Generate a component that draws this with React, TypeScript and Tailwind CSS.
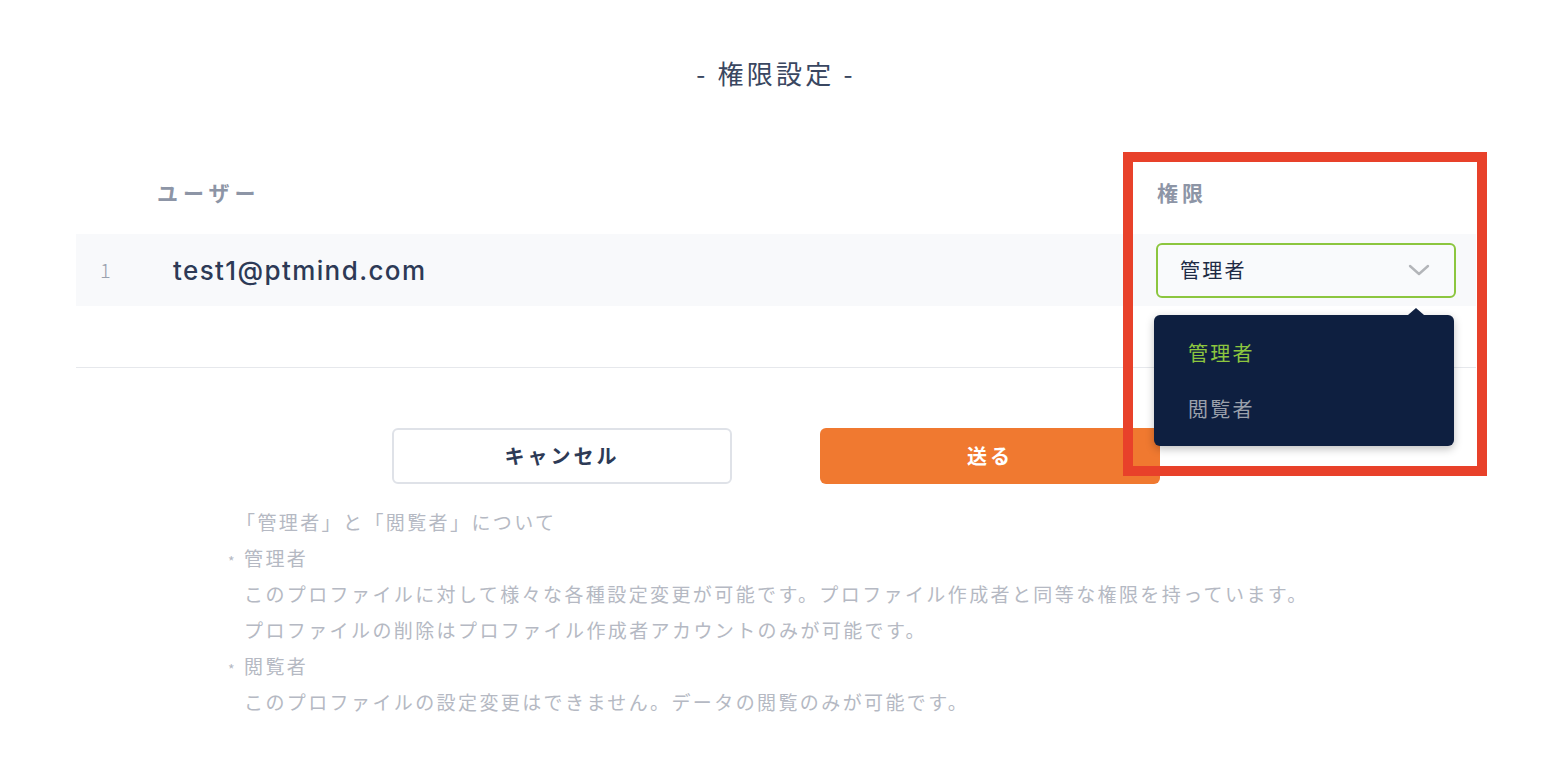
const jp = { fontFamily: '"Noto Sans CJK JP", "Noto Sans", sans-serif' };

function Chevron() {
  return (
    <svg width="22" height="12" viewBox="0 0 22 12" fill="none">
      <path d="M2 2l9 8 9-8" stroke="#b3b5b9" strokeWidth="2.4" strokeLinecap="round" strokeLinejoin="round" />
    </svg>
  );
}

function Bullet({ label }: { label: string }) {
  return (
    <div className="flex">
      <span className="w-[16px] translate-y-[3px] text-[14px] tracking-normal text-[#b5b9c3]">*</span>
      <span>{label}</span>
    </div>
  );
}

export default function App() {
  return (
    <div className="relative min-h-[770px] w-full bg-white" style={jp}>
      <div className="mx-auto w-[1400px] pt-[55px]">
        <h1 className="text-center text-[26px] leading-[36px] tracking-[3.25px] text-[#3a4761]">- 権限設定 -</h1>

        {/* table */}
        <div className="mt-[88px] flex h-[28px] items-center text-[21px] font-bold tracking-[5px] text-[#8d95a6]">
          <div className="pl-[81px]">ユーザー</div>
          <div className="ml-auto w-[320px] pl-[1px] tracking-[4px]">権限</div>
        </div>
        <div className="mt-[27px] flex h-[72px] items-center bg-[#f8f9fb]">
          <div className="w-[97px] pl-[24px] text-[20px] font-light text-[#9aa1ae]">1</div>
          <div className="text-[26px] font-medium tracking-[1.4px] text-[#2d3a56]" style={{ fontFamily: "Inter, sans-serif" }}>
            test1@ptmind.com
          </div>
          <div className="relative ml-auto mr-[20px] w-[300px]">
            <div className="flex h-[55px] items-center justify-between rounded-[6px] border-2 border-[#8cc63f] bg-[#f9fafc] pl-[22px] pr-[24px]">
              <span className="text-[20px] tracking-[2.3px] text-[#1e2a45]">管理者</span>
              <Chevron />
            </div>
            <div className="absolute left-[-2px] top-[72px] z-10 h-[131px] w-[300px] rounded-[6px] bg-[#0e1f40] pt-[20px] shadow-[0_3px_8px_rgba(0,0,0,0.25)]">
              <div className="absolute right-[30px] top-[-7px] h-0 w-0 border-x-[8px] border-b-[7px] border-x-transparent border-b-[#0e1f40]" />
              <div className="flex h-[36px] items-center pl-[34px] text-[20px] tracking-[2.3px] text-[#8cc63f]">管理者</div>
              <div className="mt-[20px] flex h-[36px] items-center pl-[34px] text-[20px] tracking-[2.3px] text-[#9aa0ab]">閲覧者</div>
            </div>
          </div>
        </div>
        <div className="mt-[61px] h-px bg-[#e6e8ec]" />

        {/* buttons */}
        <div className="mt-[60px] flex justify-center gap-[88px]">
          <button className="flex h-[56px] w-[340px] items-center justify-center rounded-[6px] border-2 border-[#dfe2e8] bg-white text-[20px] font-bold tracking-[3px] text-[#2d3a56]">
            キャンセル
          </button>
          <button className="flex h-[56px] w-[340px] items-center justify-center rounded-[6px] bg-[#f07930] text-[20px] font-bold tracking-[3px] text-white">
            送る
          </button>
        </div>

        {/* notes */}
        <div className="mt-[20px] pl-[152px] text-[19px] leading-[36px] tracking-[2.4px] text-[#b5b9c3]">
          <div className="pl-[8px]">「管理者」と「閲覧者」について</div>
          <Bullet label="管理者" />
          <div className="pl-[16px]">このプロファイルに対して様々な各種設定変更が可能です。プロファイル作成者と同等な権限を持っています。</div>
          <div className="pl-[16px]">プロファイルの削除はプロファイル作成者アカウントのみが可能です。</div>
          <Bullet label="閲覧者" />
          <div className="pl-[16px]">このプロファイルの設定変更はできません。データの閲覧のみが可能です。</div>
        </div>
      </div>

      {/* highlight frame */}
      <div className="pointer-events-none absolute left-[1123px] top-[152px] z-20 h-[324px] w-[364px] border-[10px] border-[#e8412a]" />
    </div>
  );
}
